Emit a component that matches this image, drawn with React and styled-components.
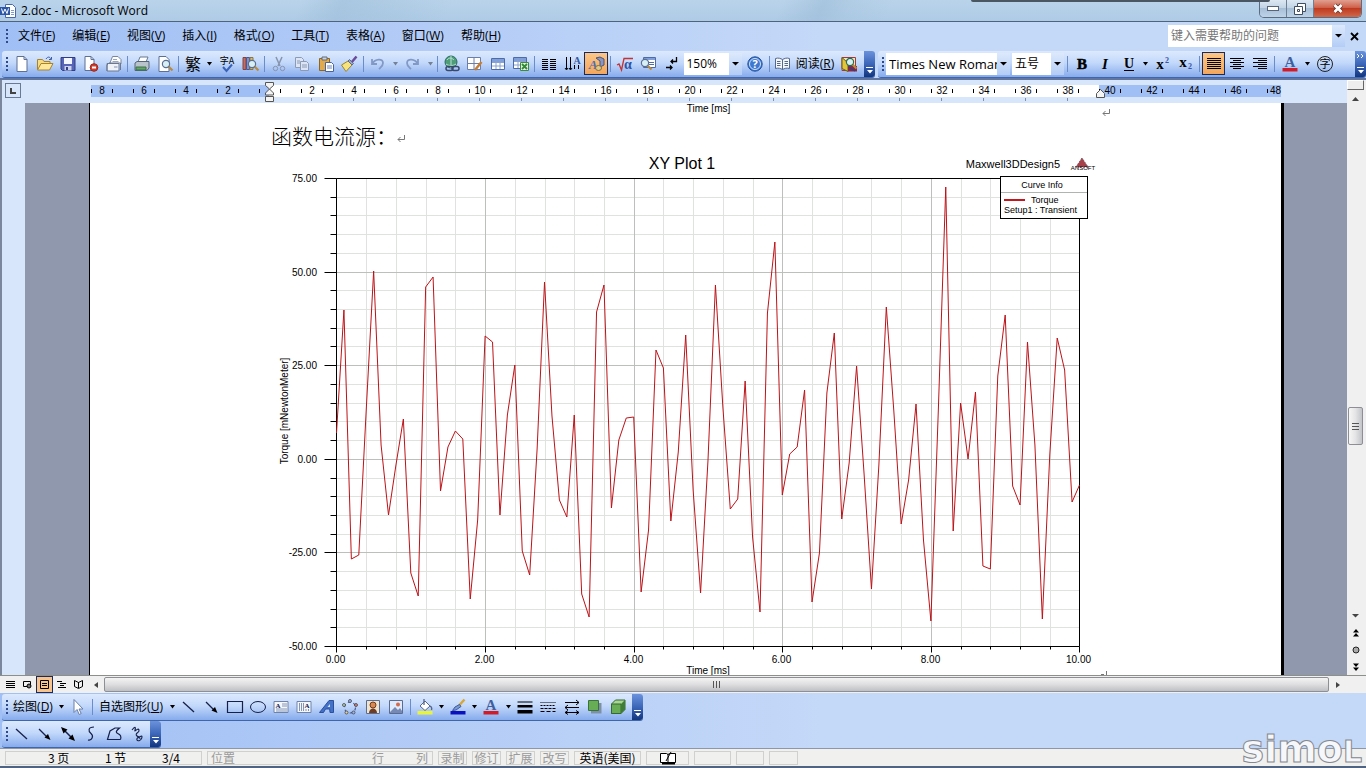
import React from "react";
import styled, { createGlobalStyle, css } from "styled-components";

const UI = '"Open Sans", "Noto Sans CJK SC", sans-serif';
const ARIAL = '"Liberation Sans", Arial, sans-serif';

const GlobalStyle = createGlobalStyle`
  *, *::before, *::after { box-sizing: border-box; }
  body { margin: 0; overflow: hidden; background: #c4d8f8; font: 12px/16px ${UI}; color: #000; }
  button, input, select { font: inherit; color: inherit; margin: 0; padding: 0; border: 0; background: none; border-radius: 0; }
  button { cursor: default; }
  svg { display: block; overflow: visible; }
`;

/* ---------- frame ---------- */
const Window = styled.div`
  position: relative;
  display: flex;
  flex-direction: column;
  height: 100vh;
`;
const TitleBar = styled.header`
  display: flex;
  align-items: center;
  flex: none;
  height: 22px;
  padding-right: 4px;
  background:
    linear-gradient(115deg, transparent 22%, #9dbdd988 25%, transparent 33%, transparent 57%, #9bbad688 60%, #a6c4df66 62%, transparent 65%),
    linear-gradient(#b9d3ea, #aecbe6);
  border-bottom: 1px solid #51627c;
`;
const Title = styled.h1`
  flex: 1;
  margin: 0 0 0 5px;
  font-size: 12px;
  line-height: 20px;
  font-weight: 400;
`;
const BackWindow = styled.span`
  position: absolute;
  top: 0;
  right: 96px;
  width: 299px;
  height: 2px;
  background: #4b5663;
  border-bottom-left-radius: 3px;
  border-bottom-right-radius: 3px;
`;
const Caption = styled.div`
  display: flex;
  align-self: flex-start;
  height: 18px;
  border: 1px solid #5b6c80;
  border-top: 0;
  border-radius: 0 0 5px 5px;
  overflow: hidden;
`;
const CaptionButton = styled.button`
  display: grid;
  place-items: center;
  width: ${(p) => (p.$close ? 47 : 27)}px;
  background: ${(p) => (p.$close ? "linear-gradient(#e0a090, #cf6049 45%, #c03a20 50%, #cf6a4c)" : "linear-gradient(#dce8f3, #c3d4e6 45%, #a7bfd6 50%, #bdd3e8)")};
  border-right: ${(p) => (p.$close ? 0 : "1px solid #6c7f95")};
`;

/* ---------- bars ---------- */
const MenuBar = styled.nav`
  display: flex;
  align-items: center;
  flex: none;
  gap: 1px;
  height: 29px;
  padding: 0 5px 1px 6px;
  background: linear-gradient(90deg, #a0bff5, #c4d8f8 60%);
`;
const MenuItem = styled.button`
  height: 22px;
  padding: 0 8px;
  white-space: nowrap;
`;
const HelpBox = styled.label`
  display: flex;
  width: 177px;
  height: 22px;
  margin-left: auto;
  background: #fff;
`;
const HelpInput = styled.input`
  flex: 1;
  min-width: 0;
  padding-left: 3px;
  &::placeholder { color: #777; opacity: 1; }
`;
const Drop = styled.span`
  display: grid;
  place-items: center;
  flex: none;
  width: 13px;
  background: linear-gradient(#dde9fc, #b4cdf6);
  pointer-events: none;
`;
const CloseDoc = styled.button`
  display: grid;
  place-items: center;
  width: 14px;
  height: 22px;
  margin-left: 1px;
`;
const Rebar = styled.div`
  display: flex;
  align-items: flex-end;
  flex: none;
  gap: 3px;
  height: ${(p) => p.$h}px;
  padding-left: 2px;
  background: linear-gradient(90deg, #a0bff5, #c4d8f8 60%);
  border-bottom: ${(p) => (p.$rule ? "2px solid #6075a0" : 0)};
`;
const Bar = styled.div`
  display: flex;
  align-items: stretch;
  flex: ${(p) => (p.$grow ? "1 1 0" : "none")};
  min-width: 0;
  height: 27px;
  background: linear-gradient(#dce9fd, #c3d9fb 45%, #86abec);
  border-bottom: 1px solid #3f66ab;
  border-radius: 3px;
`;
const Grip = styled.span`
  flex: none;
  width: 2px;
  margin: 6px 0 6px 4px;
  background: repeating-linear-gradient(#2f4a8c 0 2px, transparent 2px 4px);
`;
const EndCap = styled.button`
  display: flex;
  flex-direction: column;
  align-items: center;
  justify-content: flex-end;
  flex: none;
  gap: 8px;
  width: 11px;
  margin-left: ${(p) => (p.$push ? "auto" : 0)};
  padding-bottom: 3px;
  background: linear-gradient(#6b92dc, #3c66b8 50%, #12357e);
  border-radius: 0 3px 3px 0;
`;
const Group = styled.div`
  display: flex;
  align-items: center;
  flex: none;
  width: ${(p) => p.$w}px;
  padding: 0 2px 1px;
  border-right: ${(p) => (p.$last ? 0 : "1px solid transparent")};
  border-image: ${(p) => (p.$last ? "none" : "linear-gradient(transparent 20%, #6a8ccb 20% 80%, transparent 80%) 1")};
`;
const Tool = styled.button`
  display: grid;
  place-items: center;
  flex: 1 1 0;
  min-width: 0;
  height: 23px;
  ${(p) => p.$on && css`
    background: linear-gradient(#fcc88a, #f3a55a);
    outline: 1px solid #1c2a5a;
    outline-offset: -1px;
  `}
`;
const Arrow = styled.button`
  display: grid;
  place-items: center;
  flex: none;
  width: 10px;
  height: 22px;
  opacity: ${(p) => (p.$dim ? 0.4 : 1)};
`;
const TextTool = styled.button`
  display: flex;
  align-items: center;
  justify-content: center;
  flex: none;
  gap: 4px;
  height: 22px;
  width: ${(p) => p.$w}px;
  white-space: nowrap;
`;
const ComboBox = styled.label`
  display: flex;
  flex: none;
  width: ${(p) => p.$w}px;
  height: 22px;
  margin-right: 2px;
  background: #fff;
  font-size: ${(p) => (p.$large ? 13 : 12)}px;
`;
const Select = styled.select`
  flex: 1;
  min-width: 0;
  padding-left: 3px;
  appearance: none;
  overflow: hidden;
`;

/* ---------- document ---------- */
const Workspace = styled.main`
  display: flex;
  flex: 1 1 0;
  min-height: 0;
  border-left: 2px solid #7b879c;
`;
const Editor = styled.div`
  display: flex;
  flex-direction: column;
  flex: 1;
  min-width: 0;
  background: #d8e6fb;
`;
const RulerRow = styled.div`
  display: flex;
  flex: none;
  height: 23px;
  padding: 5px 66px 0 3px;
`;
const TabStop = styled.button`
  display: grid;
  place-items: center;
  flex: none;
  width: 16px;
  height: 15px;
  margin: -2px 70px 0 0;
  border: 1px solid #6b7a94;
`;
const Track = styled.div`
  position: relative;
  display: flex;
  flex: ${(p) => (p.$w ? `0 0 ${p.$w}px` : "1 1 0")};
  min-width: 0;
  height: 12px;
  padding-left: ${(p) => p.$lead || 0}px;
  background: ${(p) => (p.$dark ? "#a0bff5" : "#fff")};
`;
const RulerCell = styled.span`
  position: relative;
  flex: none;
  width: 42px;
  font: 10px/12px ${ARIAL};
  background:
    linear-gradient(#000, #000) 0 4px / 1px 4px no-repeat,
    linear-gradient(#000, #000) 21px 4px / 1px 4px no-repeat;
  padding-right: 20px;
  text-align: center;
  &::after {
    content: "";
    display: ${(p) => (p.$foot ? "block" : "none")};
    width: 1px;
    height: 3px;
    margin: 1px 0 0 10px;
    background: #8090ac;
  }
`;
const LastCell = styled(RulerCell)`
  width: 14px;
  padding: 0 0 0 3px;
  background: linear-gradient(#000, #000) 0 4px / 1px 4px no-repeat;
`;
const HalfCell = styled.span`
  flex: none;
  width: ${(p) => p.$w}px;
  background: linear-gradient(#000, #000) 0 4px / 1px 4px no-repeat;
`;
const Marker = styled.span`
  position: absolute;
  top: ${(p) => p.$top}px;
  left: -4px;
  z-index: 1;
`;
const Desk = styled.div`
  flex: 1;
  min-height: 0;
  margin-left: 23px;
  padding: 0 63px 0 65px;
  background: #9098ae;
  overflow: hidden;
`;
const Page = styled.article`
  height: 100%;
  padding-left: 181px;
  background: #fff;
  border-right: 3px solid #000;
  box-shadow: -1px 0 0 #000;
  overflow: hidden;
`;
const CaptionLine = styled.p`
  display: flex;
  align-items: flex-start;
  width: 839px;
  height: 18px;
  margin: 0;
  padding-left: 44px;
  font: 10px/11px ${ARIAL};
  span { flex: 1; text-align: center; }
  svg { margin-top: 5px; }
`;
const Heading = styled.h2`
  display: flex;
  align-items: center;
  height: 29px;
  margin: 0;
  font: 300 21px/29px "Noto Sans CJK SC", sans-serif;
  svg { margin-top: 5px; }
`;
const VScroll = styled.div`
  display: flex;
  flex-direction: column;
  align-items: center;
  flex: none;
  width: 19px;
  padding-right: 2px;
  background: #f0f0f0;
`;
const SplitBox = styled.button`
  width: 17px;
  height: 10px;
  background: #eee;
  border: 1px solid #fff;
  border-right-color: #666;
  border-bottom-color: #666;
`;
const ScrollButton = styled.button`
  display: grid;
  place-items: center;
  flex: none;
  width: 17px;
  height: 17px;
`;
const ScrollSpace = styled.span`
  flex: ${(p) => p.$n} 1 0;
`;
const VThumb = styled.button`
  display: grid;
  place-items: center;
  width: 15px;
  height: 38px;
  background: linear-gradient(90deg, #f6f6f6, #e4e4e6 50%, #c2c4c8);
  border: 1px solid #8d8f94;
  border-radius: 2px;
`;
const HRow = styled.div`
  display: flex;
  align-items: center;
  flex: none;
  height: 18px;
  padding: 0 20px 0 2px;
  background: #f0f0f0;
  border-top: 1px solid #8c9088;
`;
const ViewButton = styled.button`
  display: grid;
  place-items: center;
  width: 17px;
  height: 17px;
  ${(p) => p.$on && css`
    background: #f9c48b;
    border: 1px solid #1c2a5a;
  `}
`;
const HThumb = styled.button`
  display: grid;
  place-items: center;
  flex: 1;
  height: 15px;
  background: linear-gradient(#f4f4f4, #dedee0 50%, #bfc0c4);
  border: 1px solid #8d8f94;
  border-radius: 2px;
`;

/* ---------- status ---------- */
const Status = styled.footer`
  display: flex;
  flex: none;
  gap: 5px;
  height: 20px;
  padding: 2px 0 1px 5px;
  background: #f0f0ee;
  border-top: 1px solid #8d97a8;
  border-bottom: 2px solid #506380;
  font: 12px/12px "Noto Sans CJK SC", sans-serif;
`;
const Cell = styled.span`
  display: flex;
  align-items: flex-start;
  justify-content: ${(p) => p.$spread || "center"};
  flex: none;
  width: ${(p) => p.$w}px;
  padding: ${(p) => p.$pad || 0};
  color: ${(p) => (p.$dim ? "#9a9a9a" : "#000")};
  border: 1px solid #d0d0ce;
  white-space: nowrap;
`;
const Cols = styled.span`
  display: flex;
  gap: 32px;
`;
const Watermark = styled.div`
  position: absolute;
  right: 4px;
  bottom: 0;
  font: 700 38px/32px "DejaVu Sans", sans-serif;
  color: #f6f7fa;
  -webkit-text-stroke: 1px #85888f;
  span { font-size: 30px; }
`;

/* ---------- drawings ---------- */
const Tri = ({ c = "#000", w = 5, dir = "down" }) => (
  <svg width={dir === "down" || dir === "up" ? w : 4} height={dir === "down" || dir === "up" ? 4 : 6} fill={c} aria-hidden="true">
    {dir === "down" && <path d={`M0 0h${w}L${w / 2} 3.5z`} />}
    {dir === "up" && <path d={`M0 4h${w}L${w / 2} 0z`} />}
    {dir === "left" && <path d="M4 0v6L0 3z" />}
    {dir === "right" && <path d="M0 0v6L4 3z" />}
  </svg>
);
const ReturnMark = () => (
  <svg width="8" height="9" fill="none" stroke="#777" aria-hidden="true">
    <path d="M7.500 1v4.500H1M3.500 3L1 5.500l2.500 2.500" />
  </svg>
);

const page = <path d="M4 1.500h7l3 3v12H4z" fill="#fff" stroke="#5c6f94" />;
const pageFold = <path d="M11 1.500v3h3" fill="none" stroke="#5c6f94" />;
const lens = (x, y, s = "#5a6f92") => (
  <g><path d={`M${x + 2.500} ${y + 2.500}l4 4`} stroke="#b98a3c" strokeWidth="2.200" /><circle cx={x} cy={y} r="3.600" fill="#d8f0f4" stroke={s} strokeWidth="1.200" /></g>
);
const glyph = (t, x, y, size, fill = "#000", font = UI, extra = {}) => (
  <text x={x} y={y} fontSize={size} fill={fill} stroke="none" fontFamily={font} textAnchor="middle" {...extra}>{t}</text>
);
const bars = (rows) => rows.map(([x, w], i) => <path key={i} d={`M${x} ${3.500 + i * 2}h${w}`} stroke="#000" />);
const SERIF = '"Liberation Serif", serif';

const ICONS = {
  new: <>{page}{pageFold}</>,
  open: <><path d="M1.500 14.500v-10h5l1.500 2h6v3" fill="#f7dc82" stroke="#a9822c" /><path d="M1.500 15l3.500-6.500h12L13.500 15z" fill="#ffe79c" stroke="#a9822c" /><path d="M10 4c2-3 4-2 5 0M15.500 2v2.500H13" fill="none" stroke="#3b5da8" /></>,
  save: <><path d="M2 2.500h14v13H3.500L2 14z" fill="#5764b8" stroke="#303c85" /><path d="M5 3h8v6H5z" fill="#f4f6ff" /><path d="M5.500 11h7v4.500h-7z" fill="#cdd2ec" /><path d="M7 12h2v3H7z" fill="#303c85" /></>,
  permit: <><path d="M3 1.500h6l3 3v11H3z" fill="#fff" stroke="#5c6f94" /><path d="M9 1.500v3h3" fill="none" stroke="#5c6f94" /><circle cx="12" cy="12.500" r="3.800" fill="#d23c2c" stroke="#96281c" /><path d="M10 12.500h4" stroke="#fff" strokeWidth="2" /></>,
  mailDoc: <><path d="M5 8l2.500-6.500H13l3 3V9" fill="#fff" stroke="#7a869c" /><path d="M8 4.500h4M7.500 6.500h6" stroke="#9aa6bc" /><path d="M2 8.500h12v7.500H2z" fill="#eef1f6" stroke="#6a7892" /><path d="M2 16v-6l2-2h11.500v7" fill="none" stroke="#6a7892" /><path d="M9 11h3.500v2H9z" fill="#b8c2d4" /></>,
  print: <><path d="M5 7l2-5h8l-2 5z" fill="#fff" stroke="#68788e" /><path d="M2 8l2-1.500h12V13l-2 2.500H2z" fill="#b9c3cc" stroke="#56657a" /><path d="M3 12h10v3H3z" fill="#5fa667" stroke="#3f6f4b" /></>,
  preview: <><path d="M3 1.500h7l3 3v12H3z" fill="#fff" stroke="#5c6f94" />{lens(10, 9)}</>,
  trad: glyph("繁", 9, 15, 16, "#000", '"Noto Sans CJK SC", sans-serif'),
  spell: <>{glyph("字A", 9, 9, 9, "#000", '"Noto Sans CJK SC", sans-serif')}<path d="M5 12l3.500 4L14 9.500" fill="none" stroke="#3c62b8" strokeWidth="2" /></>,
  research: <><path d="M2 2.500h3v12H2z" fill="#c56b63" stroke="#7c4646" /><path d="M5.500 2.500h3v12h-3z" fill="#8391c8" stroke="#4b568e" /><path d="M9 2.500h3v12H9z" fill="#d6bd78" stroke="#8a7440" />{lens(11, 9)}</>,
  cut: <g stroke="#8794ae" fill="none"><path d="M6 2l4 9M12 2L8 11" strokeWidth="1.500" /><circle cx="5.500" cy="13.500" r="2.200" /><circle cx="12.500" cy="13.500" r="2.200" /></g>,
  copy: <g stroke="#8c9ab4" fill="#dbe5f5"><path d="M2.500 2.500h6l2 2v8h-8z" /><path d="M7.500 6.500h6l2 2v7h-8z" /><path d="M9 10h5M9 12h5M4 6h3M4 8h3" /></g>,
  paste: <><path d="M2.500 3.500h10v12h-10z" fill="#e0aa4d" stroke="#8d6524" /><path d="M5 2h5v3H5z" fill="#ccd2da" stroke="#616b7b" /><path d="M8.500 7.500h6l2 2v7h-8z" fill="#fff" stroke="#49649c" /><path d="M10 11h5M10 13h5" stroke="#6c86c0" /></>,
  brush: <><path d="M16.500 1.500L11 8" stroke="#6a4a9a" strokeWidth="2.500" /><path d="M8 6l4 4-6 6.500L1.500 10z" fill="#f7e37c" stroke="#9a8430" /><path d="M8 6l4 4 1.500-1.500-4-4z" fill="#9aa6c8" stroke="#5d6b92" /></>,
  undo: <path d="M3 4v5h5M3.500 8.500C6 4 14 3 14 8c0 3-2 4-4 6" fill="none" stroke="#8299c6" strokeWidth="1.800" />,
  redo: <path d="M14 4v5H9M13.500 8.500C11 4 3 3 3 8c0 3 2 4 4 6" fill="none" stroke="#8299c6" strokeWidth="1.800" />,
  globe: <><circle cx="8" cy="7" r="6" fill="#4f9d78" stroke="#2b6a66" /><path d="M4 5c2-3 5-2 7 0M3 9c3 2 7 2 10 0M8 1v12" fill="none" stroke="#b6e2d4" /><rect x="3" y="11.500" width="7" height="4" rx="2" fill="none" stroke="#39496e" strokeWidth="1.500" /><rect x="9" y="11.500" width="7" height="4" rx="2" fill="none" stroke="#39496e" strokeWidth="1.500" /></>,
  borders: <><path d="M1.500 2.500h13v12h-13z" fill="#fff" stroke="#6d7fa6" /><path d="M8 3v11M2 8.500h12" stroke="#6d7fa6" /><path d="M15.500 7L9 15" stroke="#c47d35" strokeWidth="2.500" /></>,
  table: <><path d="M2.500 3.500h13v11h-13z" fill="#fff" stroke="#4e6ba8" /><path d="M3 4h12v3H3z" fill="#7f9fdc" /><path d="M7 4v10M11 4v10M3 7.500h12M3 11h12" stroke="#8aa2d0" /></>,
  excel: <><path d="M1.500 2.500h13v11h-13z" fill="#fff" stroke="#4e6ba8" /><path d="M2 3h12v3H2z" fill="#7f9fdc" /><path d="M6 3v10M10 3v10M2 6.500h12M2 10h12" stroke="#8aa2d0" /><path d="M8.500 7.500h8v8h-8z" fill="#e3f1df" stroke="#3d8b40" /><path d="M10 9l5 5M15 9l-5 5" stroke="#2f8a35" strokeWidth="1.800" /></>,
  columns: <path d="M2 4.500h6M2 6.500h6M2 8.500h6M2 10.500h6M2 12.500h6M2 14.500h6M10 4.500h6M10 6.500h6M10 8.500h6M10 10.500h6M10 12.500h6M10 14.500h6" stroke="#000" />,
  direction: <><path d="M2.500 2v12M6.500 2v12M10.500 10v4M14.500 10v4M1 13l1.500 2L4 13M5 13l1.500 2L8 13" fill="none" stroke="#000" />{glyph("A", 13, 9, 10, "#3658a0", SERIF, { fontWeight: 700 })}</>,
  drawing: <>{glyph("A", 6, 14, 13, "#4d6cb8", SERIF, { fontWeight: 700, fontStyle: "italic" })}<path d="M9 3l4-1 4 2v6l-4 2V6z" fill="#8c95bd" stroke="#4c5478" /><ellipse cx="11.500" cy="13" rx="3" ry="2.500" fill="#e0c98c" stroke="#7d6c3e" /></>,
  sqrt: <><path d="M1 10l2-1 2.500 6L8 3.500h9" fill="none" stroke="#c23333" strokeWidth="1.300" />{glyph("α", 12, 14, 14, "#2e53a8", SERIF, { fontWeight: 700 })}</>,
  docMap: <><path d="M4.500 2.500h12v10h-12z" fill="#fff" stroke="#4e6ba8" /><path d="M5 3h11v2H5z" fill="#7f9fdc" /><path d="M10 7.500h5M10 9.500h5" stroke="#4e6ba8" />{lens(6, 8)}</>,
  marks: <path d="M13.500 2v4.500H8M10 4.500L8 6.500l2 2M3 12.500h6M7 10.500l2 2-2 2" fill="none" stroke="#000" strokeWidth="1.300" />,
  help: <><circle cx="9" cy="9" r="7.200" fill="#3f78d0" stroke="#24519c" /><circle cx="9" cy="9" r="5.500" fill="none" stroke="#cfe2fb" />{glyph("?", 9, 13, 11, "#fff", UI, { fontWeight: 700 })}</>,
  book: <><path d="M1.500 3.500c3-1 5 0 7 1 2-1 4-2 7-1v10c-3-1-5 0-7 1-2-1-4-2-7-1z" fill="#f5f7fb" stroke="#54678c" /><path d="M8.500 4.500v10M3 6.500h3.500M3 8.500h3.500M3 10.500h3.500M10.500 6.500H14M10.500 8.500H14M10.500 10.500H14" stroke="#54678c" /></>,
  lookup: <><path d="M2 2.500h13.500v13H2z" fill="#f0e6c0" stroke="#a03a3a" /><path d="M2 2.500v11l6 3V8z" fill="#e3c53a" stroke="#6a5a14" /><path d="M8 11h9v5.500H8z" fill="#8c2740" /><path d="M9 12l6 4" stroke="#2c3f8c" strokeWidth="1.500" />{lens(10, 7, "#2d6a4c")}</>,
  bold: glyph("B", 9, 14, 15, "#000", SERIF, { fontWeight: 700, stroke: "#000", strokeWidth: 0.5 }),
  italic: glyph("I", 9, 14, 15, "#000", SERIF, { fontWeight: 700, fontStyle: "italic" }),
  underline: <>{glyph("U", 9, 13, 14, "#000", SERIF, { fontWeight: 700 })}<path d="M4 15.500h10" stroke="#000" /></>,
  sup: <>{glyph("x", 7, 14, 15, "#000", SERIF, { fontWeight: 700 })}{glyph("2", 14, 8, 8, "#3455a8", SERIF, { fontWeight: 700 })}</>,
  sub: <>{glyph("x", 7, 12, 15, "#000", SERIF, { fontWeight: 700 })}{glyph("2", 14, 14, 8, "#3455a8", SERIF, { fontWeight: 700 })}</>,
  justify: bars([[2, 14], [2, 14], [2, 14], [2, 14], [2, 14], [2, 14]]),
  center: bars([[2, 14], [5, 8], [2, 14], [5, 8], [2, 14], [5, 8]]),
  right: bars([[2, 14], [7, 9], [2, 14], [7, 9], [2, 14], [7, 9]]),
  fontColor: <>{glyph("A", 9, 12, 15, "#3f5f9e", SERIF, { fontWeight: 700 })}<path d="M1.500 13h15v3.500h-15z" fill="#d01c28" /></>,
  enclosed: <><circle cx="9" cy="9" r="7.500" fill="none" stroke="#222" />{glyph("字", 9, 13, 11, "#000", '"Noto Sans CJK SC", sans-serif')}</>,
  pointer: <path d="M5 1.500v13l3-3 2.200 5 2-1-2.200-4.500h4z" fill="#fff" stroke="#6b7ea8" />,
  line: <path d="M3 4l11 10" stroke="#16204a" strokeWidth="1.300" />,
  arrow: <><path d="M3 4l8 8" stroke="#16204a" strokeWidth="1.300" /><path d="M14.500 15l-6-2.500 3.500-3.500z" fill="#000" /></>,
  dblArrow: <><path d="M4 4l10 10" stroke="#16204a" strokeWidth="1.500" /><path d="M16 16l-6.500-2.500 4-4zM2 2l6.500 2.500-4 4z" fill="#000" /></>,
  rect: <path d="M1.500 3.500h15v11h-15z" fill="none" stroke="#16204a" strokeWidth="1.200" />,
  oval: <ellipse cx="9" cy="9" rx="7.500" ry="5.500" fill="none" stroke="#16204a" />,
  textBox: <><path d="M2 3.500h14v11H2z" fill="#f4f7fc" stroke="#6f82a8" />{glyph("A", 6, 9.500, 7, "#16204a", SERIF, { fontWeight: 700 })}<path d="M10 6h5M10 8h5M4 11h11M4 13h11" stroke="#8496b8" /></>,
  vTextBox: <><path d="M2 3.500h14v11H2z" fill="#f4f7fc" stroke="#6f82a8" />{glyph("A", 12, 9.500, 7, "#16204a", SERIF, { fontWeight: 700 })}<path d="M4.500 5v8M6.500 5v8M8.500 5v8M11 11v2M13.500 11v2" stroke="#8496b8" /></>,
  wordArt: <><path d="M1.500 14.500L11 2.500h4.500v12h-3.500l-.3-3.500H7.500L5.500 14.500z" fill="#4271c6" stroke="#2b4f9e" /><path d="M9.500 9l2.500-3v3z" fill="#cfe0fa" /></>,
  diagram: <><circle cx="9" cy="9.500" r="5.500" fill="none" stroke="#4c5f92" strokeWidth="1.200" strokeDasharray="3 2.760" /><g stroke="#445" strokeWidth=".8"><circle cx="9" cy="3" r="1.500" fill="#9eb5e0" /><circle cx="3" cy="7" r="1.500" fill="#b7d69e" /><circle cx="15" cy="7" r="1.500" fill="#e0806a" /><circle cx="5.500" cy="14.500" r="1.500" fill="#e5d28e" /><circle cx="12.500" cy="14.500" r="1.500" fill="#9eb5e0" /></g></>,
  clip: <><path d="M2.500 2.500h13v13h-13z" fill="#efe5cf" stroke="#5c6c90" /><circle cx="9" cy="7" r="3" fill="#d9894f" stroke="#6f3c22" /><path d="M5 15c0-6 8-6 8 0z" fill="#6f3c22" /></>,
  picture: <><path d="M2.500 2.500h13v13h-13z" fill="#dfeafb" stroke="#5c6c90" /><path d="M3 14l5-5 3 3 2-2 2 3v2H3z" fill="#7688b4" /><circle cx="11" cy="6.500" r="2" fill="#d36a4a" /></>,
  fill: <><path d="M4 8l5-5 5 5-5 4.500z" fill="#fff" stroke="#56658a" /><path d="M8 1v6M14 8c2 1 2 2.500 1.500 4" fill="none" stroke="#56658a" strokeWidth="1.300" /><path d="M1.500 13h15v3.500h-15z" fill="#e8f43c" /></>,
  pen: <><path d="M15.500 1.500L10 7.500" stroke="#d6a83c" strokeWidth="2.500" /><path d="M10.500 6.500l1.500 2-5 3.500-3.500.5L6 9z" fill="#7a9ad8" stroke="#3e5a96" /><path d="M1.500 13h15v3.500h-15z" fill="#0a10c0" /></>,
  lineStyle: <path d="M1.500 3.500h15v1h-15zM1.500 7h15v2.500h-15zM1.500 12h15v3.500h-15z" fill="#000" />,
  dashStyle: <g stroke="#000"><path d="M1.500 4.500h15" strokeDasharray="1 1" /><path d="M1.500 7.500h15" strokeDasharray="2 1" /><path d="M1.500 10.500h15" strokeDasharray="3 1" /><path d="M1.500 13.500h15" strokeDasharray="4 2" /></g>,
  arrowStyle: <path d="M2 4.500h14M13 2l3 2.500L13 7M16 9.500H2M5 7L2 9.500 5 12M2 14.500h14M5 12.500l-3 2 3 2M13 12.500l3 2-3 2" fill="none" stroke="#000" />,
  shadow: <><path d="M5 5h10.500v10.500H5z" fill="#7d90a8" /><path d="M2.500 2.500h10v10h-10z" fill="#67ad55" stroke="#3c7237" /></>,
  cube: <><path d="M2.500 6l4-4h9.500v9.500l-4 4H2.500z" fill="#a9d695" stroke="#37682f" /><path d="M2.500 6H12v9.500H2.500z" fill="#68ad56" stroke="#37682f" /><path d="M12 6l4-4v9.500l-4 4z" fill="#3f7c36" /></>,
  curve: <path d="M12 2C6 2 6 6 9 8.500S10 16 6 15" fill="none" stroke="#16204a" strokeWidth="1.200" />,
  freeform: <path d="M2.500 14.500L5 6l5-3h4.500c-6 5-2 5 0 6.500s1.500 5 .5 5z" fill="none" stroke="#16204a" strokeWidth="1.200" />,
  scribble: <path d="M4 5c3-4 4-3 3 0s3-3 4 0-5 3-2 6 5-2 5 1-4 5-5 3 3-4 3-1" fill="none" stroke="#16204a" strokeWidth="1.100" />,
};

const Icon = ({ name }) => (
  <svg width="18" height="18" viewBox="0 0 18 18" fill="none" aria-hidden="true">{ICONS[name]}</svg>
);
const Tools = ({ names, on }) => names.map((n) => (
  <Tool key={n} $on={n === on} aria-label={n}><Icon name={n} /></Tool>
));
const More = ({ dim }) => <Arrow $dim={dim} aria-label="more"><Tri /></Arrow>;
const Cap = ({ push, chevron }) => (
  <EndCap $push={push} aria-label="toolbar options">
    {chevron && <svg width="8" height="5" fill="none" stroke="#fff"><path d="M0 0l2 2-2 2M4 0l2 2-2 2" /></svg>}
    <svg width="7" height="7" fill="#fff"><path d="M0 0h7v1H0zM1 3h6L4 6.500z" /></svg>
  </EndCap>
);
const Combo = ({ w, label, value, large }) => (
  <ComboBox $w={w} $large={large}>
    <Select aria-label={label} defaultValue={value}><option>{value}</option></Select>
    <Drop><Tri w={7} /></Drop>
  </ComboBox>
);

/* Torque trace: one vertical position per 0.1 ms sample */
const TRACE = [
  433, 310, 559, 555, 410, 271, 445, 515, 465, 419, 573, 596, 287, 277, 491, 447, 431, 439, 599, 520,
  336, 342, 515, 415, 365, 551, 575, 449, 282, 416, 500, 517, 415, 594, 617, 312, 285, 508, 440, 418,
  417, 592, 530, 350, 368, 521, 452, 335, 490, 593, 460, 285, 407, 509, 499, 381, 537, 612, 313, 242,
  495, 454, 447, 390, 602, 553, 393, 333, 519, 463, 366, 473, 589, 465, 307, 410, 524, 480, 404, 540,
  621, 410, 187, 531, 403, 459, 392, 566, 569, 376, 315, 486, 505, 342, 445, 619, 455, 338, 370, 502, 485,
];
const X0 = 336.5, X1 = 1079.5, Y0 = 178.5, Y1 = 646.5;
const crispX = (v) => Math.ceil(v - 0.5) + 0.5;
const crispY = (v) => Math.floor(v) + 0.5;
const xs = Array.from({ length: 26 }, (_, i) => ({ x: crispX(X0 + (i * (X1 - X0)) / 25), major: i % 5 === 0, label: (i * 0.4).toFixed(2) }));
const ys = Array.from({ length: 26 }, (_, i) => ({ y: crispY(Y0 + (i * (Y1 - Y0)) / 25), major: i % 5 === 0, label: (75 - i * 5).toFixed(2) }));

const ChartSvg = styled.svg`
  overflow: hidden;
  font-family: ${ARIAL};
  font-size: 10px;
`;
const Chart = () => (
  <ChartSvg width="837" height="525" viewBox="271 150 837 525" role="img" aria-label="XY Plot 1">
    <text x="682" y="169" fontSize="16" textAnchor="middle">XY Plot 1</text>
    <text x="1060" y="168" fontSize="11" textAnchor="end">Maxwell3DDesign5</text>
    <path d="M1082 158l-6 9h12z" fill="#a8404a" stroke="#7d5560" strokeDasharray="2 1" />
    <text x="1083" y="170" fontSize="6" textAnchor="middle">ANSOFT</text>
    <g fill="none">
      {xs.filter((t) => !t.major).map((t) => <path key={t.x} d={`M${t.x} ${Y0}V${Y1}`} stroke="#dfe2df" />)}
      {ys.filter((t) => !t.major).map((t) => <path key={t.y} d={`M${X0} ${t.y}H${X1}`} stroke="#dfe2df" />)}
      {xs.filter((t) => t.major).map((t) => <path key={t.x} d={`M${t.x} ${Y0}V${Y1}`} stroke="#bcbfbc" />)}
      {ys.filter((t) => t.major).map((t) => <path key={t.y} d={`M${X0} ${t.y}H${X1}`} stroke="#bcbfbc" />)}
      {xs.map((t) => <path key={t.x} d={`M${t.x} ${Y1}v${t.major ? 6 : 3}`} stroke="#000" />)}
      {ys.map((t) => <path key={t.y} d={`M${X0} ${t.y}h${t.major ? -12 : -6}`} stroke="#000" />)}
      <path d={`M${X0} ${Y0}H${X1}V${Y1}H${X0}z`} stroke="#000" />
      <polyline points={TRACE.map((y, i) => `${X0 + (i * (X1 - X0)) / 100},${y}`).join(" ")} stroke="#bc1218" />
    </g>
    {ys.filter((t) => t.major).map((t) => <text key={t.y} x="317" y={t.y + 3.5} textAnchor="end">{t.label}</text>)}
    {xs.filter((t) => t.major).map((t) => <text key={t.x} x={t.x - 1} y="663" textAnchor="middle">{t.label}</text>)}
    <text x="708" y="674" textAnchor="middle">Time [ms]</text>
    <text transform="translate(288 411) rotate(-90)" textAnchor="middle">Torque [mNewtonMeter]</text>
    <rect x="1000.5" y="176.5" width="87" height="42" fill="#fff" stroke="#000" />
    <path d="M1001 192.500h86" stroke="#b0b4b0" />
    <path d="M1004 200h21" stroke="#c4161c" strokeWidth="2" />
    <g fontSize="9">
      <text x="1042" y="188" textAnchor="middle">Curve Info</text>
      <text x="1031" y="203">Torque</text>
      <text x="1004" y="213">Setup1 : Transient</text>
    </g>
    <path d="M1106.500 671v4M1101 674.500h3" stroke="#777" />
  </ChartSvg>
);

const MENUS = [["文件", "F"], ["编辑", "E"], ["视图", "V"], ["插入", "I"], ["格式", "O"], ["工具", "T"], ["表格", "A"], ["窗口", "W"], ["帮助", "H"]];
const evens = (a, b) => Array.from({ length: (b - a) / 2 + 1 }, (_, i) => a + i * 2);

export default function App() {
  return (
    <Window>
      <GlobalStyle />
      <TitleBar>
        <svg width="16" height="16" aria-hidden="true"><path d="M5.500 1.500h7l3 3v10h-10z" fill="#fff" stroke="#4a68a8" /><path d="M0 4h10v8H0z" fill="#2d57a8" /><path d="M1.500 5.500l1.500 5 2-4.500 2 4.500 1.500-5" fill="none" stroke="#fff" /><path d="M11 7.500h3M11 9.500h3M11 11.500h3" stroke="#7f9bd0" /></svg>
        <Title>2.doc - Microsoft Word</Title>
        <BackWindow />
        <Caption>
          <CaptionButton aria-label="Minimize"><svg width="12" height="5"><rect x=".5" y=".5" width="11" height="4" fill="#fff" stroke="#56657a" /></svg></CaptionButton>
          <CaptionButton aria-label="Restore"><svg width="12" height="12" fill="#fff" stroke="#3f4d60"><path d="M3.500.5h8v8h-8z" /><path d="M.5 3.500h8v8h-8z" /><path d="M3.500 6.500h2v2h-2z" /></svg></CaptionButton>
          <CaptionButton $close aria-label="Close"><svg width="12" height="11"><path d="M2.500 2l7 7M9.500 2l-7 7" stroke="#5e3630" strokeWidth="4.500" /><path d="M2.500 2l7 7M9.500 2l-7 7" stroke="#fff" strokeWidth="2.800" /></svg></CaptionButton>
        </Caption>
      </TitleBar>

      <MenuBar>
        <svg width="3" height="16" fill="#2f4a8c" aria-hidden="true"><path d="M0 1h2v2H0zM0 5h2v2H0zM0 9h2v2H0zM0 13h2v2H0z" /></svg>
        {MENUS.map(([t, k]) => <MenuItem key={k}>{t}(<u>{k}</u>)</MenuItem>)}
        <HelpBox>
          <HelpInput aria-label="帮助" placeholder="键入需要帮助的问题" />
          <Drop><Tri w={7} /></Drop>
        </HelpBox>
        <CloseDoc aria-label="关闭"><svg width="9" height="9" stroke="#000" strokeWidth="1.800"><path d="M1 1l7 7M8 1L1 8" /></svg></CloseDoc>
      </MenuBar>

      <Rebar $h={29} $rule>
        <Bar>
          <Grip />
          <Group $w={120}><Tools names={["new", "open", "save", "permit", "mailDoc"]} /></Group>
          <Group $w={51}><Tools names={["print", "preview"]} /></Group>
          <Group $w={86}><Tools names={["trad"]} /><More /><Tools names={["spell", "research"]} /></Group>
          <Group $w={99}><Tools names={["cut", "copy", "paste", "brush"]} /></Group>
          <Group $w={74}><Tools names={["undo"]} /><More dim /><Tools names={["redo"]} /><More dim /></Group>
          <Group $w={97}><Tools names={["globe", "borders", "table", "excel"]} /></Group>
          <Group $w={76}><Tools names={["columns", "direction", "drawing"]} on="drawing" /></Group>
          <Group $w={159}><Tools names={["sqrt", "docMap", "marks"]} /><Combo w={58} label="显示比例" value="150%" /><Tools names={["help"]} /></Group>
          <Group $w={94} $last><TextTool $w={64}><Icon name="book" /><span>阅读(<u>R</u>)</span></TextTool><Tools names={["lookup"]} /></Group>
          <Cap />
        </Bar>
        <Bar $grow>
          <Grip />
          <Group $w={184}><Combo w={124} label="字体" value="Times New Roman" large /><Combo w={52} label="字号" value="五号" /></Group>
          <Group $w={132}><Tools names={["bold", "italic", "underline"]} /><More /><Tools names={["sup", "sub"]} /></Group>
          <Group $w={75}><Tools names={["justify", "center", "right"]} on="justify" /></Group>
          <Group $w={64} $last><Tools names={["fontColor"]} /><More /><Tools names={["enclosed"]} /></Group>
          <Cap push chevron />
        </Bar>
      </Rebar>

      <Workspace>
        <Editor>
          <RulerRow>
            <TabStop aria-label="tab"><svg width="8" height="8"><path d="M2 1v5h5" fill="none" stroke="#444" strokeWidth="2" /></svg></TabStop>
            <Track $w={178} $dark>
              {[8, 6, 4, 2].map((n) => <RulerCell key={n}>{n}</RulerCell>)}
              <HalfCell $w={10} />
            </Track>
            <Track $w={830} $lead={11}>
              <Marker $top={-3}><svg width="9" height="21" fill="#f4f4f4" stroke="#555"><path d="M.5.5h8v3L4.500 7 .5 3.500zM4.500 7l4 4v2h-8v-2zM.5 14.500h8v5h-8z" /></svg></Marker>
              <HalfCell $w={21} />
              {evens(2, 38).map((n) => <RulerCell key={n} $foot>{n}</RulerCell>)}
            </Track>
            <Track $dark>
              <Marker $top={3}><svg width="11" height="10" fill="#f4f4f4" stroke="#555"><path d="M1.500 9.500v-4l4-4 4 4v4z" /></svg></Marker>
              {evens(40, 46).map((n) => <RulerCell key={n}>{n}</RulerCell>)}
              <LastCell>48</LastCell>
            </Track>
          </RulerRow>
          <Desk>
            <Page>
              <CaptionLine><span>Time [ms]</span><ReturnMark /></CaptionLine>
              <Heading>函数电流源：<ReturnMark /></Heading>
              <Chart />
            </Page>
          </Desk>
        </Editor>
        <VScroll>
          <SplitBox aria-label="split" />
          <ScrollButton aria-label="up"><Tri dir="up" w={7} c="#444" /></ScrollButton>
          <ScrollSpace $n={301} />
          <VThumb aria-label="scroll"><svg width="7" height="9" stroke="#555"><path d="M0 1.500h7M0 4.500h7M0 7.500h7" /></svg></VThumb>
          <ScrollSpace $n={162} />
          <ScrollButton aria-label="down"><Tri w={7} c="#444" /></ScrollButton>
          <ScrollButton aria-label="previous page"><svg width="6" height="8"><path d="M0 3.500h6L3 0zM0 7.500h6L3 4z" /></svg></ScrollButton>
          <ScrollButton aria-label="browse"><svg width="8" height="8"><circle cx="4" cy="4" r="3" fill="#aaa" stroke="#222" /></svg></ScrollButton>
          <ScrollButton aria-label="next page"><svg width="6" height="8"><path d="M0 .5h6L3 4zM0 4.500h6L3 8z" /></svg></ScrollButton>
        </VScroll>
      </Workspace>

      <HRow>
        <ViewButton aria-label="normal"><svg width="9" height="9" stroke="#000"><path d="M0 1.500h9M0 3.500h9M0 5.500h9M0 7.500h9" /></svg></ViewButton>
        <ViewButton aria-label="web"><svg width="9" height="9" fill="none" stroke="#000"><path d="M.5 1.500h7v5h-7z" /><circle cx="6" cy="6" r="2" fill="#777" /></svg></ViewButton>
        <ViewButton $on aria-label="print layout"><svg width="9" height="9" fill="none" stroke="#000"><path d="M.5.5h8v8h-8zM2 3.500h5M2 5.500h5" /></svg></ViewButton>
        <ViewButton aria-label="outline"><svg width="9" height="9" stroke="#000"><path d="M0 1.500h5M3 3.500h6M3 5.500h4M1 7.500h8" /></svg></ViewButton>
        <ViewButton aria-label="reading"><svg width="9" height="9" fill="none" stroke="#000"><path d="M.5.5l4 2 4-2v6l-4 2-4-2zM4.500 2v6" /></svg></ViewButton>
        <ScrollButton aria-label="left"><Tri dir="left" c="#444" /></ScrollButton>
        <HThumb aria-label="scroll horizontally"><svg width="9" height="7" stroke="#555"><path d="M1.500 0v7M4.500 0v7M7.500 0v7" /></svg></HThumb>
        <ScrollButton aria-label="right"><Tri dir="right" c="#444" /></ScrollButton>
      </HRow>

      <Rebar $h={28}>
        <Bar>
          <Grip />
          <Group $w={85}><TextTool $w={46}><span>绘图(<u>D</u>)</span></TextTool><More /><Tools names={["pointer"]} /></Group>
          <Group $w={318}><TextTool $w={72}><span>自选图形(<u>U</u>)</span></TextTool><More /><Tools names={["line", "arrow", "rect", "oval", "textBox", "vTextBox", "wordArt", "diagram", "clip", "picture"]} /></Group>
          <Group $w={221} $last><Tools names={["fill"]} /><More /><Tools names={["pen"]} /><More /><Tools names={["fontColor"]} /><More /><Tools names={["lineStyle", "dashStyle", "arrowStyle", "shadow", "cube"]} /></Group>
          <Cap />
        </Bar>
      </Rebar>
      <Rebar $h={27}>
        <Bar>
          <Grip />
          <Group $w={142} $last><Tools names={["line", "arrow", "dblArrow", "curve", "freeform", "scribble"]} /></Group>
          <Cap />
        </Bar>
      </Rebar>

      <Status>
        <Cell $w={197} $spread="space-between" $pad="0 21px 0 42px"><span>3 页</span><span>1 节</span><span>3/4</span></Cell>
        <Cell $w={226} $dim $spread="space-between" $pad="0 4px 0 3px"><span>位置</span><Cols><span>行</span><span>列</span></Cols></Cell>
        {["录制", "修订", "扩展", "改写"].map((t) => <Cell key={t} $w={29} $dim>{t}</Cell>)}
        <Cell $w={67}>英语(美国)</Cell>
        <Cell $w={43}><svg width="18" height="13" fill="#fff" stroke="#000"><path d="M1.500 1.500h6l1.500 1 1.500-1h6v9h-15zM9 2v8M12 0l-5 9" /><path d="M3 11.500h13" strokeWidth="2" /></svg></Cell>
        <Cell $w={37} /><Cell $w={28} /><Cell $w={29} />
      </Status>
      <Watermark>simo<span>L</span></Watermark>
    </Window>
  );
}
